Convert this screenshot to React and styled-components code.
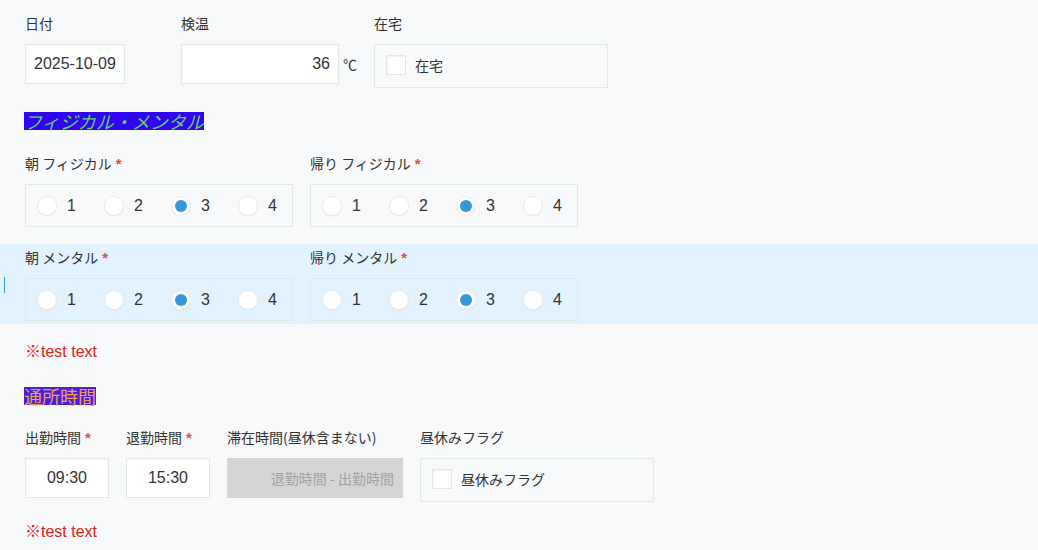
import React from "react";
import styled, { createGlobalStyle } from "styled-components";

const GlobalStyle = createGlobalStyle`
  * { box-sizing: border-box; }
  html, body { margin: 0; padding: 0; background: #f7f9fa; }
  body {
    font-family: "Liberation Sans", "Noto Sans CJK JP", sans-serif;
    color: #333;
    width: 1038px;
    height: 550px;
    overflow: hidden;
  }
`;

const Page = styled.div`
  padding-top: 13px;
`;

const Row = styled.div`
  position: relative;
  display: flex;
  align-items: flex-start;
  padding: ${(p) => p.$pad || "0"} 0 ${(p) => p.$pad || "0"} 25px;
  margin-top: ${(p) => p.$top || 0}px;
  background: ${(p) => (p.$active ? "#e2f2fe" : "transparent")};
`;

const Caret = styled.span`
  position: absolute;
  left: 4px;
  top: 33px;
  width: 1px;
  height: 16px;
  background: #3498db;
`;

const Field = styled.div`
  width: ${(p) => p.$w}px;
  flex: none;
  display: flex;
  flex-direction: column;
`;

const Label = styled.div`
  height: 20px;
  line-height: 20px;
  font-family: "Noto Sans CJK JP", sans-serif;
  font-size: 14px;
  color: #333;
  margin-bottom: 11px;
  white-space: nowrap;
`;

const Required = styled.span`
  color: #e74c3c;
  margin-left: 4px;
  font-family: "Liberation Sans", sans-serif;
  font-size: 15px;
  font-weight: bold;
`;

const ControlLine = styled.div`
  display: flex;
  align-items: center;
`;

const TextBox = styled.div`
  width: ${(p) => p.$w}px;
  height: 40px;
  padding: 0 ${(p) => (p.$align === "center" ? 0 : 8)}px;
  display: flex;
  align-items: center;
  justify-content: ${(p) =>
    p.$align === "right" ? "flex-end" : p.$align === "center" ? "center" : "flex-start"};
  background: ${(p) => (p.$disabled ? "#d5d5d5" : "#fff")};
  border: 1px solid ${(p) => (p.$disabled ? "#d5d5d5" : "#e3e7e8")};
  box-shadow: ${(p) => (p.$disabled ? "none" : "inset 0 1px 2px rgba(0,0,0,0.03)")};
  font-size: ${(p) => (p.$disabled ? 14 : 16)}px;
  font-family: ${(p) =>
    p.$disabled ? `"Noto Sans CJK JP", sans-serif` : `"Liberation Sans", "Noto Sans CJK JP", sans-serif`};
  color: ${(p) => (p.$disabled ? "#a3a3a3" : "#333")};
  white-space: nowrap;
`;

const Unit = styled.span`
  margin-left: 4px;
  font-size: 14px;
  font-family: "Noto Sans CJK JP", sans-serif;
  color: #333;
`;

const OptionBox = styled.div`
  width: ${(p) => p.$w}px;
  height: ${(p) => p.$h || 44}px;
  display: flex;
  align-items: center;
  padding-left: ${(p) => p.$pl || 11}px;
  padding-bottom: ${(p) => p.$pb || 0}px;
  background: ${(p) => (p.$active ? "#e2f2fe" : "#f7f9fa")};
  border: 1px solid #e3e7e8;
`;

const CheckSquare = styled.span`
  width: 20px;
  height: 20px;
  background: #fff;
  border: 1px solid #e3e7e8;
  box-shadow: 1px 1px 1px rgba(0, 0, 0, 0.05) inset;
  margin-right: 9px;
  flex: none;
`;

const OptionText = styled.span`
  font-family: "Noto Sans CJK JP", sans-serif;
  font-size: 14px;
  color: #333;
`;

const RadioItem = styled.span`
  display: inline-flex;
  align-items: center;
  margin-right: 28px;
  &:last-child { margin-right: 0; }
`;

const RadioCircle = styled.span`
  width: 20px;
  height: 20px;
  border-radius: 50%;
  background: #fff;
  border: 1px solid #e8ecee;
  box-shadow: 0 1px 1px rgba(0, 0, 0, 0.04);
  margin-right: 10px;
  display: flex;
  align-items: center;
  justify-content: center;
  flex: none;
  &::after {
    content: "";
    width: 12px;
    height: 12px;
    border-radius: 50%;
    background: #3498db;
    display: ${(p) => (p.$on ? "block" : "none")};
  }
`;

const RadioText = styled.span`
  font-size: 16px;
  color: #333;
  width: 9px;
`;

const SectionTitle = styled.div`
  padding-left: 24px;
  margin-top: ${(p) => p.$top}px;
  height: 18px;
  display: flex;
`;

const TitleText = styled.span`
  background: ${(p) => p.$bg};
  color: ${(p) => p.$fg};
  font-family: "Noto Sans CJK JP", sans-serif;
  font-size: 18px;
  line-height: 18px;
  height: 18px;
  font-style: ${(p) => (p.$italic ? "italic" : "normal")};
  white-space: nowrap;
`;

const Note = styled.div`
  padding-left: 25px;
  margin-top: ${(p) => p.$top}px;
  height: 20px;
  line-height: 20px;
  color: #e01e1e;
  font-size: 16px;
  font-family: "Liberation Sans", "Noto Sans CJK JP", sans-serif;
`;

function RadioGroup({ value, active }) {
  return (
    <OptionBox $w={268} $h={43} $pl={11} $active={active}>
      {[1, 2, 3, 4].map((n) => (
        <RadioItem key={n}>
          <RadioCircle $on={n === value} />
          <RadioText>{n}</RadioText>
        </RadioItem>
      ))}
    </OptionBox>
  );
}

function RadioField({ label, value, active }) {
  return (
    <Field $w={285}>
      <Label>
        {label}
        <Required>*</Required>
      </Label>
      <RadioGroup value={value} active={active} />
    </Field>
  );
}

export default function App() {
  return (
    <>
      <GlobalStyle />
      <Page>
        <Row>
          <Field $w={156}>
            <Label>日付</Label>
            <TextBox $w={100}>2025-10-09</TextBox>
          </Field>
          <Field $w={193}>
            <Label>検温</Label>
            <ControlLine>
              <TextBox $w={158} $align="right">36</TextBox>
              <Unit>℃</Unit>
            </ControlLine>
          </Field>
          <Field $w={234}>
            <Label>在宅</Label>
            <OptionBox $w={234} $h={44} $pb={3}>
              <CheckSquare />
              <OptionText>在宅</OptionText>
            </OptionBox>
          </Field>
        </Row>

        <SectionTitle $top={24}>
          <TitleText $bg="#3104f2" $fg="#62d15e" $italic>
            フィジカル・メンタル
          </TitleText>
        </SectionTitle>

        <Row $top={23}>
          <RadioField label="朝 フィジカル" value={3} />
          <RadioField label="帰り フィジカル" value={3} />
        </Row>

        <Row $top={17} $pad="3px" $active>
          <Caret />
          <RadioField label="朝 メンタル" value={3} active />
          <RadioField label="帰り メンタル" value={3} active />
        </Row>

        <Note $top={18}>※test text</Note>

        <SectionTitle $top={25}>
          <TitleText $bg="#4a1fdc" $fg="#eea24f">通所時間</TitleText>
        </SectionTitle>

        <Row $top={22}>
          <Field $w={101}>
            <Label>
              出勤時間<Required>*</Required>
            </Label>
            <TextBox $w={84} $align="center">09:30</TextBox>
          </Field>
          <Field $w={101}>
            <Label>
              退勤時間<Required>*</Required>
            </Label>
            <TextBox $w={84} $align="center">15:30</TextBox>
          </Field>
          <Field $w={193}>
            <Label>滞在時間(昼休含まない)</Label>
            <TextBox $w={176} $align="right" $disabled>
              退勤時間 - 出勤時間
            </TextBox>
          </Field>
          <Field $w={234}>
            <Label>昼休みフラグ</Label>
            <OptionBox $w={234} $h={44} $pb={3}>
              <CheckSquare />
              <OptionText>昼休みフラグ</OptionText>
            </OptionBox>
          </Field>
        </Row>

        <Note $top={20}>※test text</Note>
      </Page>
    </>
  );
}
